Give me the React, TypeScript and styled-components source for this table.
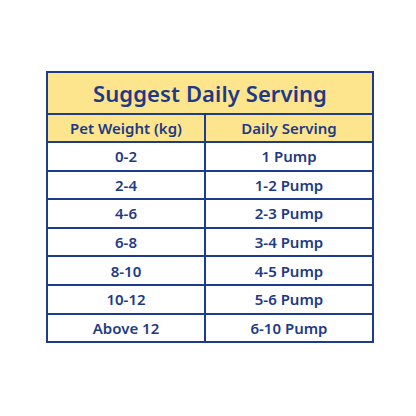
import React from 'react';
import styled, { createGlobalStyle } from 'styled-components';

const navy = '#1f3c8c';
const ink = '#1e3a86';
const butter = '#fde58d';

const GlobalStyle = createGlobalStyle`
  html, body {
    margin: 0;
    padding: 0;
    background: #fff;
  }
  body {
    width: 416px;
    height: 416px;
    font-family: 'Noto Sans', 'Open Sans', sans-serif;
  }
`;

const Page = styled.div`
  width: 416px;
  height: 416px;
  box-sizing: border-box;
  padding: 71px 0 0 46px;
`;

const Table = styled.table`
  width: 326px;
  border-collapse: collapse;
  border: 2px solid ${navy};
  table-layout: fixed;
  color: ${ink};
  td, th {
    border: 2px solid ${navy};
    padding: 0;
    text-align: center;
    box-sizing: border-box;
  }
`;

const Col = styled.col<{ w: number }>`
  width: ${(p) => p.w}px;
`;

const Title = styled.th`
  background: ${butter};
  height: 42px;
  font-size: 22px;
  font-weight: 600;
  letter-spacing: 0.1px;
`;

const Head = styled.th`
  background: ${butter};
  height: 28px;
  font-size: 15px;
  font-weight: 600;
`;

const Cell = styled.td`
  height: 28.6px;
  font-size: 15px;
  font-weight: 600;
  background: #fff;
`;

const rows: [string, string][] = [
  ['0-2', '1 Pump'],
  ['2-4', '1-2 Pump'],
  ['4-6', '2-3 Pump'],
  ['6-8', '3-4 Pump'],
  ['8-10', '4-5 Pump'],
  ['10-12', '5-6 Pump'],
  ['Above 12', '6-10 Pump'],
];

export default function App() {
  return (
    <Page>
      <GlobalStyle />
      <Table>
        <colgroup>
          <Col w={158} />
          <Col w={168} />
        </colgroup>
        <thead>
          <tr>
            <Title colSpan={2}>Suggest Daily Serving</Title>
          </tr>
          <tr>
            <Head>Pet Weight (kg)</Head>
            <Head>Daily Serving</Head>
          </tr>
        </thead>
        <tbody>
          {rows.map(([weight, serving]) => (
            <tr key={weight}>
              <Cell>{weight}</Cell>
              <Cell>{serving}</Cell>
            </tr>
          ))}
        </tbody>
      </Table>
    </Page>
  );
}
